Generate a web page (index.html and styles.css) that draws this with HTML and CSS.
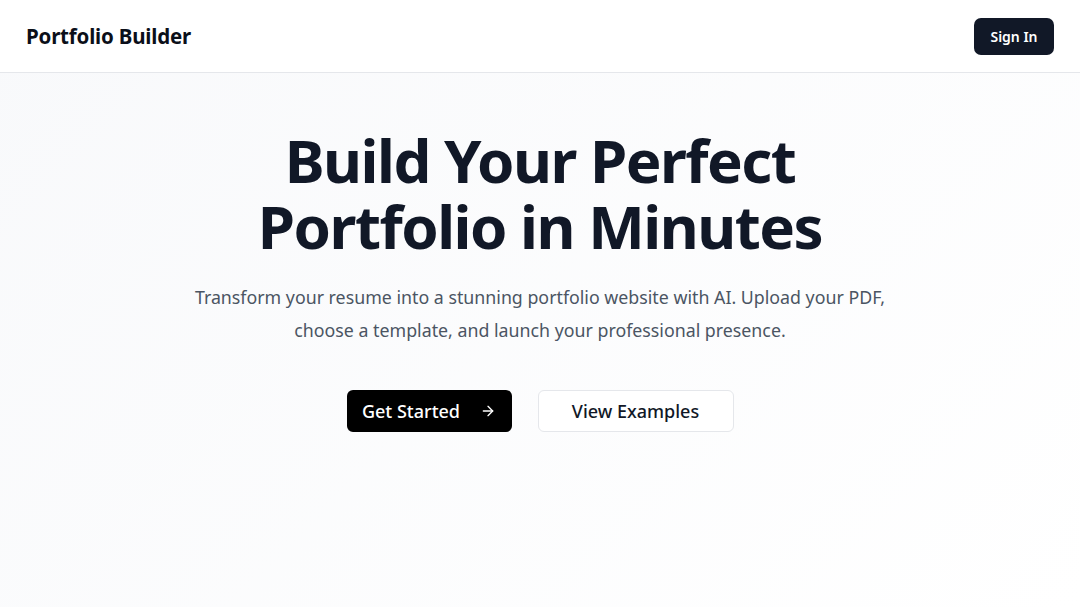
FILE: index.html
```html
<!DOCTYPE html>
<html lang="en">
<head>
<meta charset="utf-8">
<title>Portfolio Builder</title>
<link rel="stylesheet" href="styles.css">
</head>
<body>
<header class="topbar">
  <div class="brand">Portfolio Builder</div>
  <button class="btn-signin">Sign In</button>
</header>
<main class="hero">
  <h1 class="hero-title">Build Your Perfect<br>Portfolio in Minutes</h1>
  <p class="hero-text">Transform your resume into a stunning portfolio website with AI. Upload your PDF,<br>choose a template, and launch your professional presence.</p>
  <div class="actions">
    <button class="btn btn-primary">Get Started
      <svg class="arrow" width="16" height="16" viewBox="0 0 24 24" fill="none" stroke="currentColor" stroke-width="2" stroke-linecap="round" stroke-linejoin="round"><path d="M5 12h14"/><path d="m12 5 7 7-7 7"/></svg>
    </button>
    <button class="btn btn-outline">View Examples</button>
  </div>
</main>
</body>
</html>
```
FILE: styles.css
```css
* { box-sizing: border-box; }
html, body { margin: 0; padding: 0; height: 100%; }
body {
  font-family: "Noto Sans", "Open Sans", sans-serif;
  color: #111827;
  background: linear-gradient(135deg, #f8f9fb 0%, #ffffff 100%);
  overflow: hidden;
}
.topbar {
  height: 73px;
  display: flex;
  align-items: center;
  justify-content: space-between;
  padding: 0 26px;
  background: #ffffff;
  border-bottom: 1px solid #e5e7eb;
}
.brand {
  font-size: 20.5px;
  font-weight: 700;
  letter-spacing: -0.2px;
  color: #0b0f19;
}
.btn-signin {
  font-family: inherit;
  background: #111827;
  color: #fff;
  border: none;
  border-radius: 7px;
  height: 37px;
  width: 80px;
  font-size: 14px;
  font-weight: 600;
}
.hero {
  display: flex;
  flex-direction: column;
  align-items: center;
  text-align: center;
  padding-top: 54px;
}
.hero-title {
  margin: 0;
  font-size: 60px;
  line-height: 66px;
  font-weight: 700;
  letter-spacing: -1.5px;
  color: #111827;
}
.hero-text {
  margin: 22px 0 0;
  font-size: 17.8px;
  line-height: 33px;
  color: #4b5563;
}
.actions {
  display: flex;
  gap: 26px;
  margin-top: 43px;
}
.btn {
  font-family: inherit;
  height: 42px;
  border-radius: 6px;
  font-size: 18px;
  font-weight: 500;
  display: inline-flex;
  align-items: center;
  justify-content: center;
}
.btn-primary {
  background: #000;
  color: #fff;
  border: none;
  width: 165px;
  gap: 20px;
}
.btn-outline {
  background: #fff;
  color: #111827;
  border: 1px solid #e5e7eb;
  width: 196px;
}
.arrow { display: block; }
```
